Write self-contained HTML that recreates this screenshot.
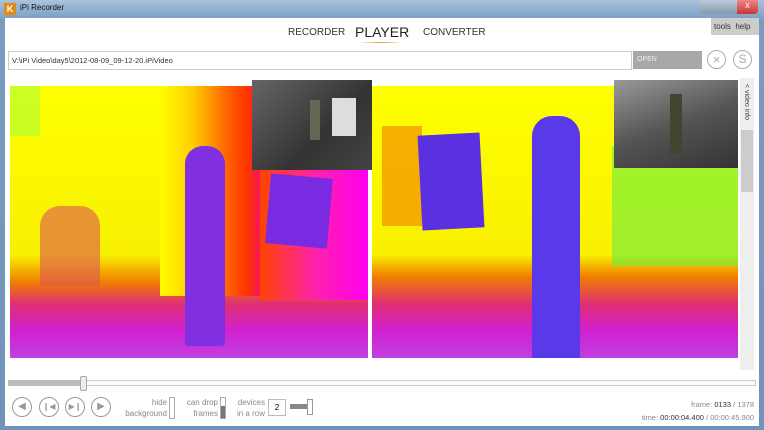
<html><head><style>
body{margin:0;width:764px;height:430px;overflow:hidden;font-family:"Liberation Sans",sans-serif;background:#6a8fb5;position:relative}
.abs{position:absolute}
</style></head><body>
<div class="abs" style="left:0;top:0;width:764px;height:430px;background:linear-gradient(#a9c3dd,#7a9cc0 20px,#6f93b9)"></div>
<div class="abs" style="left:4px;top:3px;width:12px;height:12px;background:#e08a1a;color:#fff;font-size:9px;font-weight:bold;text-align:center;line-height:12px">K</div>
<div class="abs" style="left:20px;top:3px;font-size:8px;color:#111">iPi Recorder</div>
<div class="abs" style="left:700px;top:0;width:58px;height:14px;background:linear-gradient(#bcd,#89a);border-radius:0 0 4px 4px"></div>
<div class="abs" style="left:737px;top:0;width:21px;height:14px;background:linear-gradient(#e88,#c33);border-radius:0 0 4px 0;color:#fff;font-size:9px;text-align:center">x</div>
<div class="abs" style="left:5px;top:18px;width:754px;height:408px;background:#fff"></div>
<div class="abs" style="left:711px;top:18px;width:48px;height:17px;background:#ccc"></div>
<div class="abs" style="left:714px;top:22px;font-size:8px;color:#333">tools&nbsp; help</div>
<div class="abs" style="left:288px;top:27px;font-size:10px;color:#333">RECORDER</div>
<div class="abs" style="left:355px;top:24px;font-size:14px;color:#222">PLAYER</div>
<div class="abs" style="left:358px;top:42px;width:45px;height:1px;background:linear-gradient(90deg,transparent,#d9a030,transparent)"></div>
<div class="abs" style="left:423px;top:27px;font-size:10px;color:#333">CONVERTER</div>
<div class="abs" style="left:8px;top:51px;width:622px;height:17px;border:1px solid #ccc;background:#fff"></div>
<div class="abs" style="left:12px;top:56px;font-size:7.5px;color:#333">V:\iPi Video\day5\2012-08-09_09-12-20.iPiVideo</div>
<div class="abs" style="left:633px;top:51px;width:69px;height:18px;background:#a8a8a8;color:#eee;font-size:7px;line-height:18px;padding-left:4px;box-sizing:border-box">OPEN</div>
<div class="abs" style="left:707px;top:50px;width:17px;height:17px;border:1.5px solid #aaa;border-radius:50%;color:#aaa;font-size:13px;text-align:center;line-height:17px">×</div>
<div class="abs" style="left:733px;top:50px;width:17px;height:17px;border:1.5px solid #aaa;border-radius:50%;color:#aaa;font-size:12px;text-align:center;line-height:17px">S</div>
<!-- left depth -->
<div class="abs" style="left:10px;top:86px;width:358px;height:272px;overflow:hidden;background:linear-gradient(#ffff00 0%,#f8f000 62%,#f08000 72%,#e03070 80%,#d020d0 90%,#c040e0)">
<div class="abs" style="left:150px;top:0;width:110px;height:210px;background:linear-gradient(90deg,#ff0 0%,#fc0 30%,#f60 60%,#f30 80%,#e0a 100%)"></div>
<div class="abs" style="left:250px;top:84px;width:108px;height:130px;background:linear-gradient(90deg,#f40,#f2a,#f0e)"></div>
<div class="abs" style="left:0;top:0;width:30px;height:50px;background:#9f4;opacity:.5"></div>
<div class="abs" style="left:30px;top:120px;width:60px;height:80px;background:#d55;opacity:.6;border-radius:20px 20px 0 0"></div>
<div class="abs" style="left:175px;top:60px;width:40px;height:200px;background:#8030e0;border-radius:18px 18px 4px 4px"></div>
<div class="abs" style="left:258px;top:90px;width:62px;height:70px;background:#7a2ae0;transform:rotate(5deg)"></div>
</div>
<div class="abs" style="left:252px;top:80px;width:120px;height:90px;background:linear-gradient(135deg,#666,#333 60%,#444)"><div class="abs" style="left:80px;top:18px;width:24px;height:38px;background:#ddd"></div><div class="abs" style="left:58px;top:20px;width:10px;height:40px;background:#665"></div></div>
<!-- right depth -->
<div class="abs" style="left:372px;top:86px;width:366px;height:272px;overflow:hidden;background:linear-gradient(#ffff00 0%,#f8f000 62%,#f08000 70%,#e03070 80%,#d020d0 90%,#c040e0)">
<div class="abs" style="left:240px;top:60px;width:126px;height:120px;background:#6e4;opacity:.6"></div>
<div class="abs" style="left:10px;top:40px;width:40px;height:100px;background:#e60;opacity:.5"></div>
<div class="abs" style="left:48px;top:48px;width:62px;height:95px;background:#5a30e0;transform:rotate(-3deg)"></div>
<div class="abs" style="left:160px;top:30px;width:48px;height:242px;background:#5a3ae8;border-radius:20px 20px 0 0"></div>
</div>
<div class="abs" style="left:614px;top:80px;width:124px;height:88px;background:linear-gradient(160deg,#999,#555 50%,#333)"><div class="abs" style="left:56px;top:14px;width:12px;height:60px;background:#443"></div></div>
<div class="abs" style="left:740px;top:78px;width:14px;height:292px;background:#eee"></div>
<div class="abs" style="left:741px;top:130px;width:12px;height:62px;background:#ccc"></div>
<div class="abs" style="left:743px;top:84px;font-size:7px;color:#444;writing-mode:vertical-rl">&lt; video info</div>
<!-- timeline -->
<div class="abs" style="left:8px;top:380px;width:746px;height:4px;border:1px solid #ccc;background:#fafafa"></div>
<div class="abs" style="left:8px;top:380px;width:75px;height:6px;background:#bbb"></div>
<div class="abs" style="left:80px;top:376px;width:5px;height:13px;background:#eee;border:1px solid #aaa;border-radius:2px"></div>
<div class="abs" style="left:12px;top:397px;width:18px;height:18px;border:1.5px solid #999;border-radius:50%;color:#999;font-size:10px;text-align:center;line-height:18px">◀</div>
<div class="abs" style="left:39px;top:397px;width:18px;height:18px;border:1.5px solid #999;border-radius:50%;color:#999;font-size:8px;text-align:center;line-height:18px">❙◀</div>
<div class="abs" style="left:65px;top:397px;width:18px;height:18px;border:1.5px solid #999;border-radius:50%;color:#999;font-size:8px;text-align:center;line-height:18px">▶❙</div>
<div class="abs" style="left:91px;top:397px;width:18px;height:18px;border:1.5px solid #999;border-radius:50%;color:#999;font-size:10px;text-align:center;line-height:18px">▶</div>
<div class="abs" style="left:120px;top:397px;width:47px;font-size:8px;color:#888;text-align:right;line-height:11px">hide<br>background</div>
<div class="abs" style="left:169px;top:397px;width:4px;height:20px;border:1px solid #aaa"></div>
<div class="abs" style="left:180px;top:397px;width:38px;font-size:8px;color:#888;text-align:right;line-height:11px">can drop<br>frames</div>
<div class="abs" style="left:220px;top:397px;width:4px;height:20px;border:1px solid #aaa;background:linear-gradient(#fff 40%,#777 40%)"></div>
<div class="abs" style="left:228px;top:397px;width:37px;font-size:8px;color:#888;text-align:right;line-height:11px">devices<br>in a row</div>
<div class="abs" style="left:268px;top:399px;width:16px;height:15px;border:1px solid #bbb;font-size:8px;text-align:center;line-height:15px">2</div>
<div class="abs" style="left:290px;top:404px;width:20px;height:5px;background:#888"></div>
<div class="abs" style="left:307px;top:399px;width:4px;height:14px;border:1px solid #999;background:#fff"></div>
<div class="abs" style="left:620px;top:398px;width:134px;font-size:7.5px;color:#888;text-align:right;line-height:13px">frame: <span style="color:#333">0133</span> / 1378<br>time: <span style="color:#333">00:00:04.400</span> / 00:00:45.900</div>
</body></html>
